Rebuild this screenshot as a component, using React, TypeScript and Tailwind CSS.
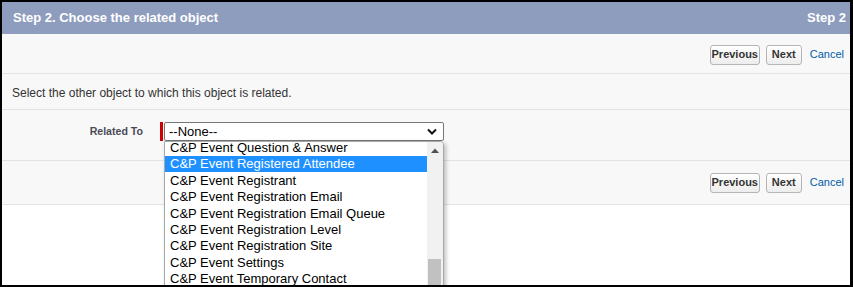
import React from 'react';

const options = [
  'C&P Event Question & Answer',
  'C&P Event Registered Attendee',
  'C&P Event Registrant',
  'C&P Event Registration Email',
  'C&P Event Registration Email Queue',
  'C&P Event Registration Level',
  'C&P Event Registration Site',
  'C&P Event Settings',
  'C&P Event Temporary Contact',
  'C&P Event Ticket',
];

function ButtonBar({ className = '' }: { className?: string }) {
  return (
    <div className={`flex items-center justify-end pr-[6px] border-b border-[#e3e3e3] ${className}`}>
      <button className="h-[20px] w-[50px] rounded-[3px] border border-[#b5b5b5] bg-gradient-to-b from-white to-[#ededed] text-[11px] font-bold text-[#333]">
        Previous
      </button>
      <button className="ml-[6px] h-[20px] w-[36px] rounded-[3px] border border-[#b5b5b5] bg-gradient-to-b from-white to-[#ededed] text-[11px] font-bold text-[#333]">
        Next
      </button>
      <a className="ml-[8px] text-[11px] text-[#015ba7]">Cancel</a>
    </div>
  );
}

export default function App() {
  return (
    <div className="relative h-[287px] w-[853px] overflow-hidden border-t-2 border-b-2 border-l-2 border-r-[3px] border-black bg-white font-['Liberation_Sans',Arial,sans-serif]">
      {/* Header */}
      <div className="flex h-[32px] items-center justify-between bg-[#8e9dbe] pl-[11px] pr-[4px] text-[13px] font-bold text-white">
        <span>Step 2. Choose the related object</span>
        <span>Step 2</span>
      </div>

      <div className="bg-[#f8f8f8]">
        <ButtonBar className="h-[40px] pt-[2px]" />

        <div className="h-[36px] border-b border-[#e3e3e3] pl-[10px] pt-[10px] text-[12px] text-[#333]">
          Select the other object to which this object is related.
        </div>

        {/* Related To row */}
        <div className="flex h-[51px] items-start border-b border-[#e3e3e3] pt-[12px]">
          <div className="w-[141px] pt-[2px] text-right text-[10.6px] font-bold text-[#4a4a56]">Related To</div>
          <div className="ml-[17px] h-[19px] w-[3px] bg-[#c00]" />
          <div className="relative ml-[1px]">
            <div className="flex h-[19px] w-[280px] items-center justify-between rounded-[2px] border border-[#767676] bg-white pl-[4px] pr-[6px] text-[13px] text-black">
              <span>--None--</span>
              <svg width="10" height="7" viewBox="0 0 10 7">
                <polyline points="1,1.5 5,5.5 9,1.5" fill="none" stroke="#111" strokeWidth="2" />
              </svg>
            </div>

            {/* Open dropdown list */}
            <div className="absolute left-0 top-[19px] z-10 flex h-[160px] w-[280px] overflow-hidden rounded-r-[4px] border border-[#a9a9a9] bg-white shadow-[2px_2px_4px_rgba(0,0,0,0.25)]">
              <div className="flex-1 overflow-hidden">
                <div className="mt-[-2.4px]">
                  {options.map((o, i) => (
                    <div
                      key={o}
                      className={`flex h-[16.4px] items-center pl-[5px] text-[13px] whitespace-nowrap ${
                        i === 1 ? 'bg-[#1e90ff] text-white' : 'text-black'
                      }`}
                    >
                      {o}
                    </div>
                  ))}
                </div>
              </div>
              <div className="relative w-[16px] bg-[#f1f1f1]">
                <svg className="absolute left-[4px] top-[6px]" width="8" height="5" viewBox="0 0 8 5">
                  <polygon points="0,5 4,0.5 8,5" fill="#505050" />
                </svg>
                <div className="absolute left-[1px] top-[117px] h-[60px] w-[13px] bg-[#c1c1c1]" />
              </div>
            </div>
          </div>
        </div>

        <ButtonBar className="h-[44px]" />
      </div>
    </div>
  );
}
